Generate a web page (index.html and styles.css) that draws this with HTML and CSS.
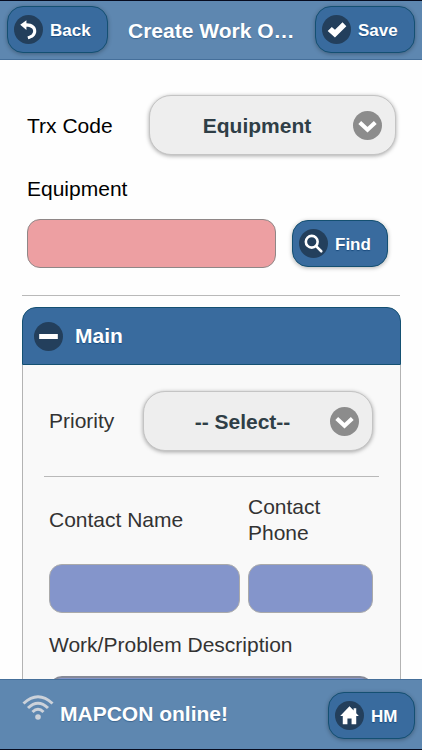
FILE: index.html
```html
<!DOCTYPE html>
<html lang="en">
<head>
    <meta charset="UTF-8">
    <meta name="viewport" content="width=device-width, initial-scale=1.0">
    <title>Create Work Order</title>
    <link rel="stylesheet" href="styles.css">
</head>
<body>
    <header class="header">
        <button class="btn btn-back">
            <svg class="icon" viewBox="0 0 28 28"><path d="M6 9.500L12 5V8C18 8 21.500 11 21.500 15.500C21.500 20 18 22.500 13.800 23.300L13 20.700C16.500 20 18.500 18 18.500 15.500C18.500 13 16 11.300 12 11.300V14.500Z"/></svg>
            <span>Back</span>
        </button>
        <h1 class="title">Create Work O…</h1>
        <button class="btn btn-save">
            <svg class="icon" viewBox="0 0 28 28"><path d="M5.500 15.500L9.500 11.500L12.500 14.300L19.800 7L23.500 10.800L12.500 21.800Z"/></svg>
            <span>Save</span>
        </button>
    </header>

    <main class="content">
        <div class="row row-trx">
            <label class="label">Trx Code</label>
            <button class="select">
                <span class="select-text">Equipment</span>
                <svg class="icon-arrow" viewBox="0 0 28 28"><path d="M6.500 11L14 18L21.500 11"/></svg>
            </button>
        </div>
        <label class="label label-equipment" for="equipment">Equipment</label>
        <div class="row row-find">
            <input class="input required" id="equipment" type="text">
            <button class="btn btn-find">
                <svg class="icon icon-search" viewBox="0 0 28 28"><circle cx="12.300" cy="12.300" r="5.700"/><path d="M16.500 16.500L21.500 21.500"/></svg>
                <span>Find</span>
            </button>
        </div>
        <hr class="line">

        <section class="panel">
            <h2 class="panel-heading">
                <svg class="icon" viewBox="0 0 28 28"><path d="M5 11.500H23V16.500H5Z"/></svg>
                Main
            </h2>
            <div class="panel-body">
                <div class="row row-priority">
                    <label class="label">Priority</label>
                    <button class="select">
                        <span class="select-text">-- Select--</span>
                        <svg class="icon-arrow" viewBox="0 0 28 28"><path d="M6.500 11L14 18L21.500 11"/></svg>
                    </button>
                </div>
                <hr class="line">
                <div class="contact">
                    <label class="label" for="contactName">Contact Name</label>
                    <label class="label" for="contactPhone">Contact Phone</label>
                    <input class="input" id="contactName" type="text">
                    <input class="input" id="contactPhone" type="text">
                </div>
                <label class="label label-description" for="description">Work/Problem Description</label>
                <textarea class="input description" id="description"></textarea>
            </div>
        </section>
    </main>

    <footer class="footer">
        <svg class="wifi" viewBox="0 0 32 26">
            <path d="M1.500 8.500Q16 -5 30.500 8.500M6 13Q16 3.500 26 13M10.500 17Q16 11.500 21.500 17"/>
            <circle cx="16" cy="22" r="2.800"/>
        </svg>
        <span class="status">MAPCON online!</span>
        <button class="btn btn-home">
            <svg class="icon" viewBox="0 0 28 28"><path d="M14 5L5 14.500H7.500V22.500H12V17H16V22.500H20.500V14.500H23L20.500 11.800V7H18V9.200Z"/></svg>
            <span>HM</span>
        </button>
    </footer>
</body>
</html>
```
FILE: styles.css
```css
* {
    box-sizing: border-box;
}
body {
    margin: 0;
    height: 750px;
    display: flex;
    flex-direction: column;
    overflow: hidden;
    background-color: #fefefe;
    font-family: "Liberation Sans", Arial, sans-serif;
    font-size: 21px;
    line-height: 26px;
    color: #000;
}

/* header */
.header {
    flex: none;
    height: 60px;
    display: flex;
    align-items: flex-start;
    padding: 5px 7px 0;
    background-color: #5e87b0;
    border-top: 1px solid #060b1e;
    border-bottom: 1px solid #456f9a;
}
.title {
    flex: 1;
    margin: 12px 0 0 20px;
    font-size: 21px;
    line-height: 26px;
    color: #fff;
    text-shadow: 0 1px 1px #3e6790;
    white-space: nowrap;
}

/* buttons */
.btn {
    flex: none;
    height: 47px;
    display: flex;
    align-items: center;
    gap: 7px;
    padding: 0 0 0 6px;
    border: 1px solid #145072;
    border-radius: 16px;
    background-color: #396b9e;
    box-shadow: 0 1px 4px rgba(0,0,0,0.3);
    color: #fff;
    font-family: inherit;
    font-size: 17px;
    font-weight: bold;
    text-shadow: 0 1px 1px #194b7e;
}
.btn span {
    padding-top: 2px;
}
.btn-back {
    width: 101px;
}
.btn-save {
    width: 100px;
}
.btn-find {
    width: 96px;
    margin-top: 1px;
}
.btn-home {
    width: 87px;
    margin-left: auto;
}
.icon {
    flex: none;
    width: 29px;
    height: 29px;
    border-radius: 50%;
    background-color: #233f5c;
    fill: #fff;
}
.icon-search {
    fill: none;
    stroke: #fff;
    stroke-width: 2.5;
    stroke-linecap: round;
}

/* form */
.content {
    flex: 1;
    min-height: 0;
    overflow: hidden;
    padding: 35px 22px 0;
}
.row {
    display: flex;
}
.row-trx {
    align-items: center;
    justify-content: space-between;
    padding: 0 4px 0 5px;
}
.row-trx .label {
    padding-top: 1px;
}
.label {
    display: block;
}
.label-equipment {
    margin: 21px 0 0 5px;
}
.select {
    width: 247px;
    height: 60px;
    display: flex;
    align-items: center;
    padding: 0 13px 0 11px;
    border: 1px solid #c4c4c4;
    border-radius: 22px;
    background-color: #eee;
    box-shadow: 0 1px 4px rgba(0,0,0,0.35);
    font-family: inherit;
    font-size: 21px;
    font-weight: bold;
    color: #2f3e46;
}
.select-text {
    flex: 1;
    padding-top: 1px;
    text-align: center;
}
.icon-arrow {
    flex: none;
    width: 29px;
    height: 29px;
    border-radius: 50%;
    background-color: #8c8c8c;
    fill: none;
    stroke: #fff;
    stroke-width: 4;
}
.input {
    display: block;
    width: 100%;
    height: 49px;
    padding: 10px;
    border: 1px solid #aaa;
    border-radius: 13px;
    background-color: #8495cb;
    font-family: inherit;
    font-size: 21px;
}
.row-find {
    gap: 16px;
    margin: 17px 12px 0 5px;
}
.required {
    flex: 1;
    min-width: 0;
    border: 1px solid #8f8787;
    background-color: #ed9fa2;
}
.line {
    height: 1px;
    margin: 27px 0 0;
    border: none;
    background-color: #b9b9b9;
}

/* collapsible panel */
.panel {
    width: 379px;
    margin-top: 11px;
}
.panel-heading {
    height: 58px;
    display: flex;
    align-items: center;
    gap: 12px;
    margin: 0;
    padding-left: 11px;
    border: 1px solid #145072;
    border-radius: 14px 14px 0 0;
    background-color: #396b9e;
    font-size: 21px;
    color: #fff;
    text-shadow: 0 1px 1px #194b7e;
}
.panel-body {
    padding: 26px 21px 0;
    border: solid #b3b3b3;
    border-width: 0 1px;
    background-color: #f9f9f9;
    color: #333;
}
.row-priority {
    align-items: center;
    justify-content: space-between;
    padding: 0 6px 0 5px;
}
.row-priority .select {
    width: 230px;
}
.panel-body .line {
    margin-top: 25px;
}
.contact {
    display: grid;
    grid-template-columns: 191px 125px;
    column-gap: 8px;
    row-gap: 18px;
    align-items: center;
    margin: 17px 5px 0;
}
.label-description {
    margin: 19px 5px 0;
}
.description {
    width: 324px;
    height: 80px;
    margin: 18px 5px 0;
    border: 2px solid #858997;
    resize: none;
}

/* footer */
.footer {
    flex: none;
    height: 71px;
    display: flex;
    align-items: flex-start;
    padding: 12px 7px 0 22px;
    background-color: #5e87b0;
    border-top: 1px solid #456f9a;
    border-bottom: 1px solid #060b1e;
}
.wifi {
    width: 32px;
    height: 26px;
    margin-top: 3px;
    fill: #ccd2da;
}
.wifi path {
    fill: none;
    stroke: #ccd2da;
    stroke-width: 3;
}
.status {
    margin: 9px 0 0 6px;
    font-weight: bold;
    color: #fff;
    text-shadow: 0 1px 1px #3e6790;
}
```
